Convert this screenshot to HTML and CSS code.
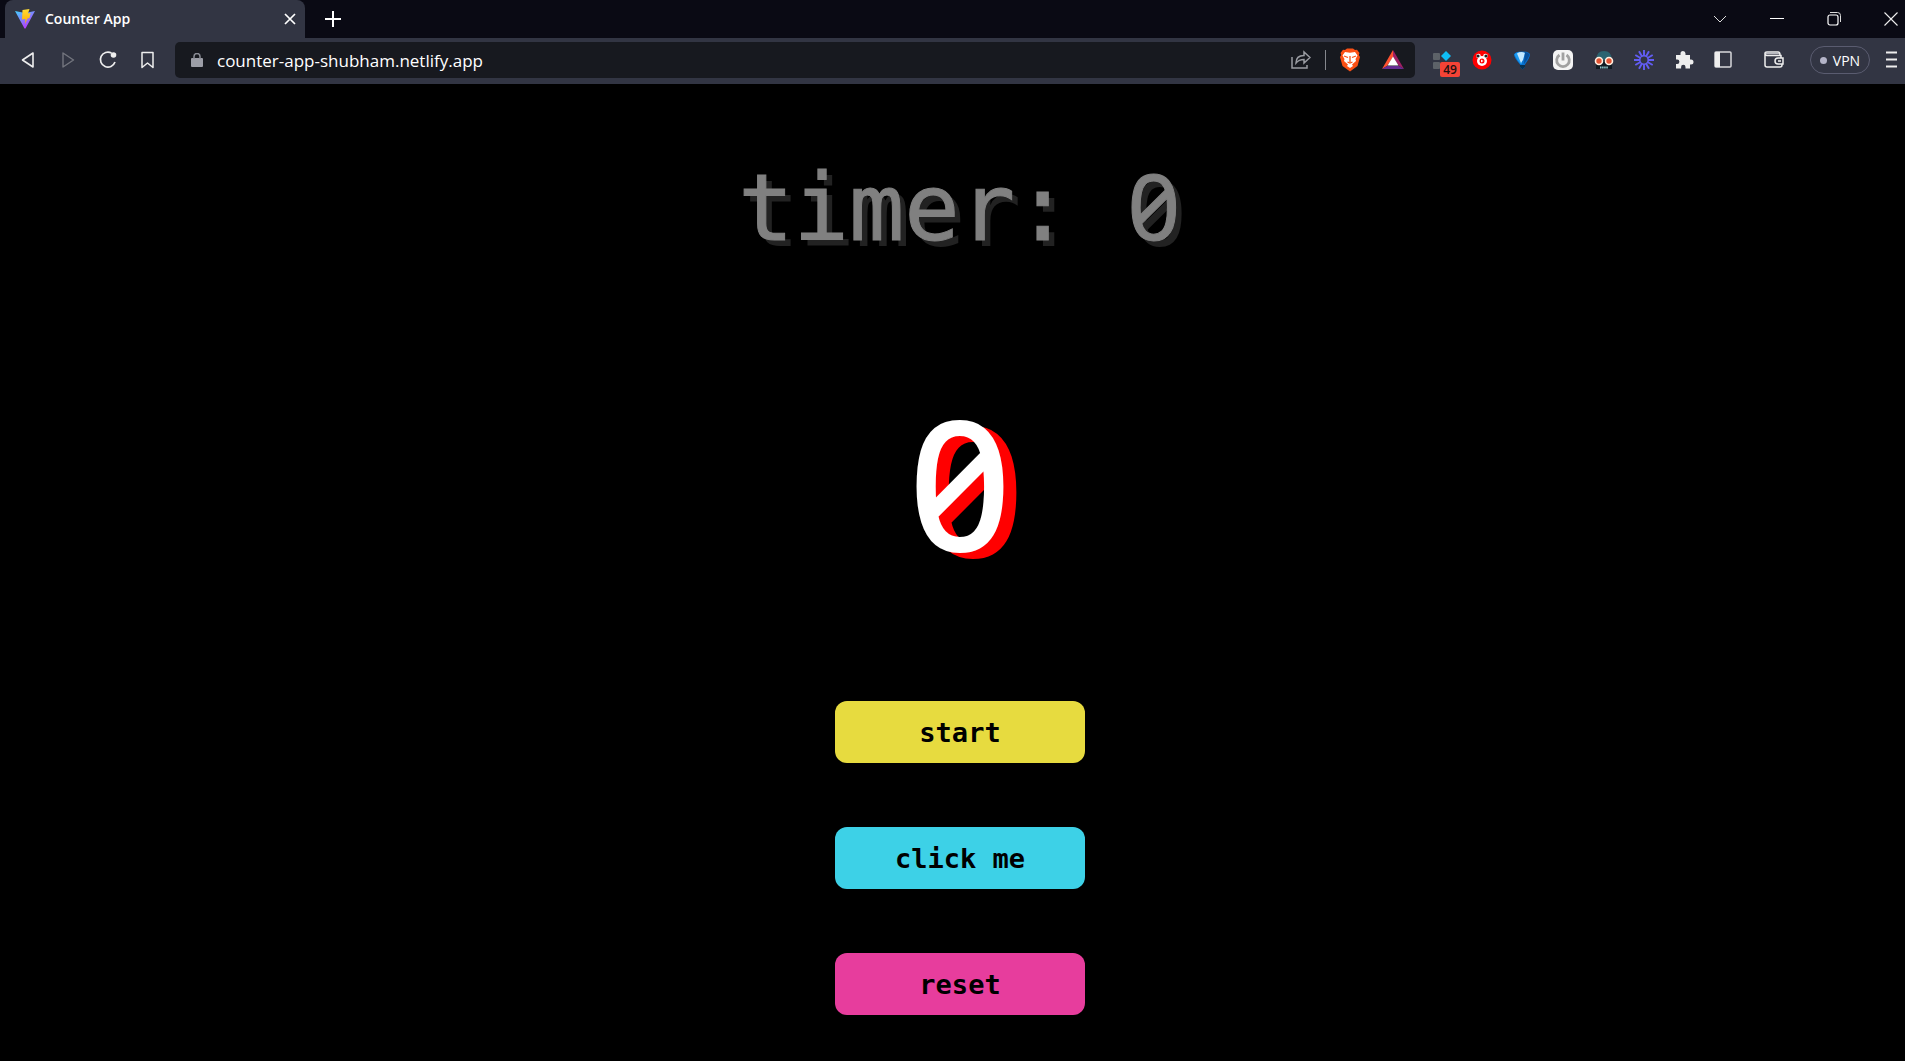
FILE: index.html
```
<!DOCTYPE html>
<html lang="en">
<head>
<meta charset="utf-8">
<title>Counter App</title>
<link rel="stylesheet" href="styles.css">
</head>
<body>
<header class="browser">
  <div class="tabs">
    <div class="tab">
      <svg class="favicon" width="20" height="20" viewBox="0 0 20 20" aria-hidden="true">
        <defs>
          <linearGradient id="shield" x1="0" y1="0" x2="0.6" y2="1"><stop offset="0" stop-color="#41d1ff"/><stop offset="1" stop-color="#bd34fe"/></linearGradient>
          <linearGradient id="bolt" x1="0" y1="0" x2="0" y2="1"><stop offset="0" stop-color="#ffdd35"/><stop offset="1" stop-color="#ffa800"/></linearGradient>
        </defs>
        <path d="M0 2l10 2 10-2-9.500 17.500h-1z" fill="url(#shield)"/>
        <path d="M7.500 1l7-1-1.500 4.500 2.500-.5-1 5-2 .5-2.500 5.500.5-5-3.500.5z" fill="url(#bolt)"/>
      </svg>
      <span class="tab-title">Counter App</span>
      <button class="icon-button close-tab" aria-label="Close tab"><svg width="12" height="12" viewBox="0 0 12 12"><path d="M1 1l10 10M11 1L1 11" stroke="#fff" stroke-width="1.700"/></svg></button>
    </div>
    <button class="icon-button new-tab" aria-label="New tab"><svg width="16" height="16" viewBox="0 0 16 16"><path d="M8 0v16M0 8h16" stroke="#fff" stroke-width="2"/></svg></button>
    <div class="window-controls">
      <button class="icon-button" aria-label="Search tabs"><svg width="14" height="14" viewBox="0 0 14 14"><path d="M1 4l6 6 6-6" fill="none" stroke="#ddd"/></svg></button>
      <button class="icon-button" aria-label="Minimise"><svg width="14" height="14" viewBox="0 0 14 14"><path d="M0 6.500h14" stroke="#fff"/></svg></button>
      <button class="icon-button" aria-label="Restore"><svg width="14" height="14" viewBox="0 0 14 14"><rect x="1" y="3" width="10" height="10" rx="2" fill="none" stroke="#fff" stroke-width="1.200"/><path d="M3 .5h7.500a3 3 0 0 1 3 3V10" fill="none" stroke="#ddd"/></svg></button>
      <button class="icon-button" aria-label="Close window"><svg width="14" height="14" viewBox="0 0 14 14"><path d="M.5.5l13 13M13.500.5l-13 13" stroke="#eee" stroke-width="1.100"/></svg></button>
    </div>
  </div>
  <div class="toolbar">
    <nav class="nav">
      <button class="icon-button" aria-label="Back"><svg width="20" height="20" viewBox="0 0 20 20"><path d="M15 3v14L4.500 10z" fill="none" stroke="#eee" stroke-width="1.600" stroke-linejoin="round"/></svg></button>
      <button class="icon-button" aria-label="Forward"><svg width="20" height="20" viewBox="0 0 20 20"><path d="M5 3v14l10.500-7z" fill="none" stroke="#73757e" stroke-width="1.400" stroke-linejoin="round"/></svg></button>
      <button class="icon-button" aria-label="Reload"><svg width="20" height="20" viewBox="0 0 20 20"><path d="M13.500 3A7.500 7.500 0 1 0 17 12" fill="none" stroke="#eee" stroke-width="1.700"/><circle cx="15.500" cy="5" r="2.800" fill="#eee"/></svg></button>
      <button class="icon-button" aria-label="Bookmark"><svg width="20" height="20" viewBox="0 0 20 20"><path d="M4 2.500h11v15L9.500 13 4 17.500z" fill="none" stroke="#eee" stroke-width="1.500" stroke-linejoin="round"/></svg></button>
    </nav>
    <div class="address">
      <svg width="12" height="14" viewBox="0 0 12 14" aria-hidden="true"><rect x="0" y="5" width="12" height="9" rx="1" fill="#9c9ea7"/><path d="M3 6V3.500a3 3 0 0 1 6 0V6" fill="none" stroke="#8a8c95" stroke-width="1.500"/></svg>
      <input class="url" type="text" aria-label="Address" value="counter-app-shubham.netlify.app">
      <button class="icon-button" aria-label="Share"><svg width="20" height="20" viewBox="0 0 20 20"><path d="M1 7v11h15v-3" fill="none" stroke="#9a9ca2" stroke-width="1.500"/><path d="M5 13c0-5 3-7.500 8-7.500V2l6 5.500-6 5.500V9.500c-4 0-6 1-8 3.500z" fill="none" stroke="#9a9ca2" stroke-width="1.500"/></svg></button>
      <span class="divider"></span>
      <button class="icon-button brave" aria-label="Brave Shields"><svg width="20" height="24" viewBox="0 0 20 24"><path d="M5 2l2-1.500h6L15 2l2-.2L19.500 5l-.7 2L20 9l-2.500 9L10 23.500 2.500 18 0 9l1.200-2L.5 5 3 1.800z" fill="#fb5015"/><path d="M5 4l5 .7 5-.7 2.500 3.500-2 3.500.5 2-4 3.500 1 1.500-3 2-3-2 1-1.500-4-3.500.5-2-2-3.500z" fill="#fff"/><path d="M4 8l4 1.500M16 8l-4 1.500M10 8v6M7.500 14l2.500 1 2.500-1" fill="none" stroke="#fb5015" stroke-width="1.300"/></svg></button>
      <button class="icon-button" aria-label="Brave Rewards"><svg width="24" height="20" viewBox="0 0 24 20"><path d="M12 0L1 19l5-3 6-9z" fill="#ff5130"/><path d="M12 0l11 19-5-3-6-9z" fill="#9e1f63"/><path d="M1 19h22l-5-3H6z" fill="#662d91"/><path d="M12 6.500L6.500 15.500h11z" fill="#fff"/></svg></button>
    </div>
    <div class="extensions">
      <button class="icon-button badged" aria-label="Extension, 49 notifications"><svg width="20" height="20" viewBox="0 0 20 20"><rect x="1" y="3" width="7" height="7" rx="1" fill="#5d6268"/><rect x="1" y="12" width="7" height="7" rx="1" fill="#5d6268"/><path d="M14 1l5 5-5 5-5-5z" fill="#0fbcf5"/></svg><span class="badge">49</span></button>
      <button class="icon-button" aria-label="Video extension"><svg width="20" height="20" viewBox="0 0 20 20"><circle cx="10" cy="10" r="9.500" fill="#f00"/><circle cx="10" cy="11" r="5" fill="#fff"/><circle cx="6.500" cy="6" r="2.300" fill="#fff"/><circle cx="13.500" cy="6" r="2.300" fill="#fff"/><circle cx="6" cy="6" r="1.600" fill="#222"/><circle cx="14" cy="6" r="1.600" fill="#222"/><circle cx="10" cy="11" r="2.500" fill="#f00"/><path d="M9 9.500v3l2.500-1.500z" fill="#fff"/></svg></button>
      <button class="icon-button" aria-label="Lamp extension"><svg width="20" height="20" viewBox="0 0 20 20"><path d="M2 4.500Q3 1.500 10 1.500t8 3q0 3-5 10V17l-2.500 2.500L8 17v-2.500Q2 7.500 2 4.500z" fill="#0871cf"/><path d="M2.500 4.500Q4 2 8 2l2 12H8.500Q3 7 2.500 4.500z" fill="#1b9af0"/><path d="M5 3.500Q9 1 13 3l-2 7-2 3z" fill="#c2e8ff"/><path d="M13 2q4 .5 4.500 3Q16 9 12 14z" fill="#07509c"/><path d="M8 15h5v2l-2.500 2.500L8 17z" fill="#07304f"/></svg></button>
      <button class="icon-button" aria-label="Power extension"><svg width="22" height="22" viewBox="0 0 22 22"><rect x="1" y="1" width="20" height="20" rx="5" fill="#f4f4f4"/><path d="M7.500 6a6.300 6.300 0 1 0 7 0M11 3.500v8" fill="none" stroke="#a1a1a1" stroke-width="2.800"/></svg></button>
      <button class="icon-button" aria-label="Mask extension"><svg width="20" height="20" viewBox="0 0 20 20"><path d="M2.500 9Q2.500 1 10 1t7.500 8v4h-15z" fill="#2c6471"/><path d="M2 12h16v7H2zM7 10h6v5H7z" fill="#101b22"/><circle cx="5" cy="11" r="3.500" fill="#e15333" stroke="#fff0e2" stroke-width="1.600"/><circle cx="15" cy="11" r="3.500" fill="#e15333" stroke="#fff0e2" stroke-width="1.600"/><path d="M6 17.500h8" stroke="#91c7cb" stroke-width="2" stroke-dasharray="1.500 .6"/></svg></button>
      <button class="icon-button" aria-label="Loom"><svg width="20" height="20" viewBox="0 0 20 20"><g stroke="#625df5" stroke-width="1.900"><path d="M10 0v6M10 14v6M0 10h6M14 10h6M5 1.300l3 5.200M12 13.500l3 5.200M1.300 5l5.200 3M13.500 12l5.200 3M1.300 15l5.200-3M13.500 8l5.200-3M5 18.700l3-5.200M12 6.500l3-5.200"/><circle cx="10" cy="10" r="4.200" fill="none" stroke-width="1.500"/></g></svg></button>
      <button class="icon-button" aria-label="Extensions"><svg width="20" height="20" viewBox="0 0 20 20"><path d="M2 5h4.500V3.500a2.500 2.500 0 0 1 5 0V5H16v4.500h1a2.500 2.500 0 0 1 0 5h-1V18.500h-4.500V17a2.200 2.200 0 0 0-4.400 0v1.500H2V14h1.200a2.200 2.200 0 0 0 0-4.400H2z" fill="#eee"/></svg></button>
      <button class="icon-button" aria-label="Sidebar"><svg width="18" height="18" viewBox="0 0 18 18"><rect x="1" y="1" width="16" height="15" rx="1" fill="none" stroke="#d8d8dc" stroke-width="1.500"/><path d="M1 1h5v15H1z" fill="#eee"/></svg></button>
    </div>
    <button class="icon-button wallet" aria-label="Wallet"><svg width="20" height="20" viewBox="0 0 20 20"><path d="M17 8V5.500H3Q1 5.500 1 3v12q0 2 2 2h13q2 0 2-2v-1M1 3.500Q1 2 3 2h11q2 0 2 3" fill="none" stroke="#eee" stroke-width="1.500"/><path d="M2 3.500h13" stroke="#b8b9c0" stroke-width="1.500"/><path d="M19 8h-5a3 3 0 0 0 0 6h5zM14 11h3" fill="none" stroke="#eee" stroke-width="1.500"/></svg></button>
    <button class="vpn">VPN</button>
    <button class="icon-button menu" aria-label="Menu"><svg width="12" height="18" viewBox="0 0 12 18"><path d="M0 1.500h11M0 8.500h11M0 15.500h11" stroke="#eee" stroke-width="2"/></svg></button>
  </div>
</header>
<main class="app">
  <h1 class="timer">timer: <span class="zero">0</span></h1>
  <output class="count"><span class="zero">0</span></output>
  <div class="actions">
    <button class="action start">start</button>
    <button class="action click">click me</button>
    <button class="action reset">reset</button>
  </div>
</main>
</body>
</html>
```
FILE: styles.css
```
* { box-sizing: border-box; }

body {
  margin: 0;
  min-height: 100vh;
  background: #000;
  color: #fff;
  font-family: "Open Sans", "Noto Sans", sans-serif;
}

button { border: 0; padding: 0; font-family: inherit; color: inherit; cursor: pointer; }

.icon-button {
  display: flex;
  flex: none;
  align-items: center;
  justify-content: center;
  background: none;
}

.tabs {
  display: flex;
  align-items: center;
  height: 38px;
  padding-left: 5px;
  background: #0a0a14;
}

.tab {
  display: flex;
  align-items: center;
  gap: 10px;
  width: 300px;
  height: 38px;
  padding: 0 9px 0 10px;
  border-radius: 8px 8px 0 0;
  background: #323543;
}

.tab-title { flex: 1; font-size: 14px; font-weight: 600; padding-bottom: 1px; }
.new-tab { margin-left: 20px; }

.window-controls {
  display: flex;
  gap: 43px;
  margin-left: auto;
  padding-right: 7px;
}

.toolbar {
  display: flex;
  align-items: center;
  height: 46px;
  padding: 0 7px 2px 18px;
  background: #323543;
}

.nav { display: flex; gap: 20px; }

.address {
  display: flex;
  flex: 1;
  align-items: center;
  height: 36px;
  margin-left: 17px;
  padding: 0 10px 0 16px;
  border-radius: 5px;
  background: #17191f;
}

.url {
  flex: 1;
  min-width: 0;
  margin-left: 14px;
  padding: 0;
  border: 0;
  outline: 0;
  background: none;
  color: #fff;
  font-family: "Open Sans", "Noto Sans", sans-serif;
  font-size: 17px;
}

.divider { width: 1px; height: 20px; margin: 0 14px; background: #85878d; }
.brave { margin-right: 21px; }

.extensions { display: flex; align-items: center; gap: 20px; margin-left: 17px; }

.badged { position: relative; }
.badge {
  position: absolute;
  top: 12px;
  left: 8px;
  width: 20px;
  border-radius: 2px;
  background: #f44336;
  color: #201010;
  font-size: 12px;
  font-weight: 600;
  line-height: 15px;
}

.wallet { margin-left: 32px; }

.vpn {
  display: flex;
  align-items: center;
  justify-content: center;
  gap: 6px;
  width: 60px;
  height: 28px;
  margin: 0 16px 0 26px;
  border: 1px solid #5a5c70;
  border-radius: 14px;
  background: none;
  font-size: 14px;
}
.vpn::before { content: ""; width: 7px; height: 7px; border-radius: 50%; background: #b4b4c8; }

.app {
  display: flex;
  flex-direction: column;
  align-items: center;
  padding: 61px 0 46px 15px;
  font-family: "DejaVu Sans Mono", monospace;
}

.timer {
  margin: 0;
  color: #808080;
  font-size: 92px;
  font-weight: 400;
  line-height: 120px;
  text-shadow: 6px 6px #222;
  -webkit-text-stroke: 1px #808080;
}

.zero {
  display: inline-block;
  min-width: 56px;
  font-family: "Noto Sans", sans-serif;
  font-feature-settings: "zero";
  text-align: center;
}

.count {
  margin-top: 103px;
  font-size: 180px;
  font-weight: 500;
  line-height: 220px;
  text-shadow: 13px 6px #f00;
}

.actions { display: flex; flex-direction: column; gap: 64px; margin-top: 102px; }

.action {
  width: 250px;
  height: 62px;
  border-radius: 12px;
  color: #000;
  font-size: 27px;
  font-weight: 700;
}
.start { background: #e7db3f; }
.click { background: #3dd1e7; }
.reset { background: #e73d9d; }
```
